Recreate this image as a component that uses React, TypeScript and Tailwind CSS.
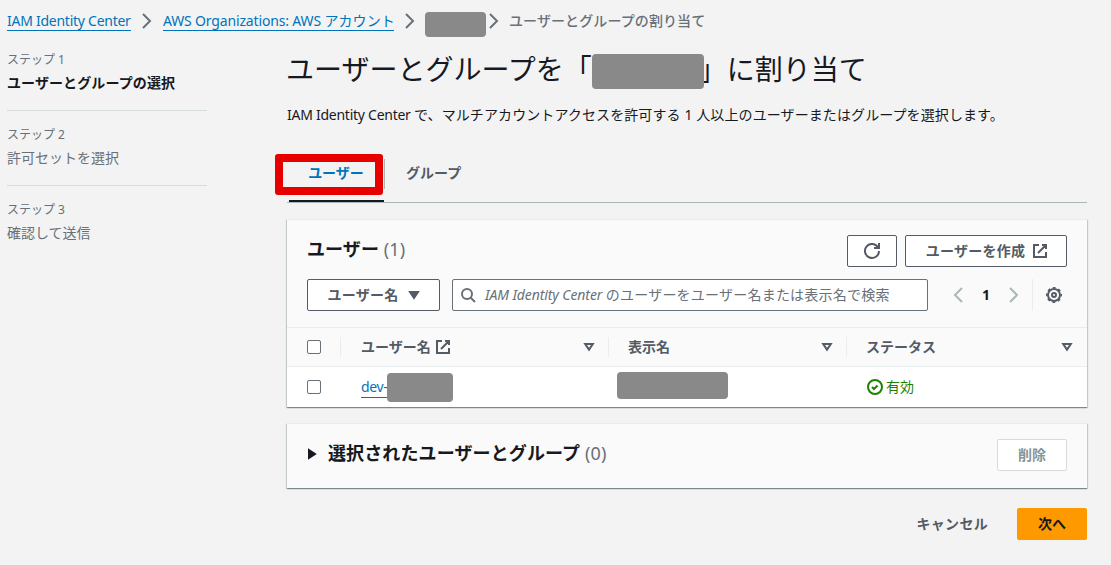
import type { ReactNode } from "react";

type IconProps = { children: ReactNode; className?: string };

function Icon({ children, className = "" }: IconProps) {
  return (
    <svg
      viewBox="0 0 16 16"
      className={`block size-4 shrink-0 fill-none stroke-current stroke-2 ${className}`}
    >
      {children}
    </svg>
  );
}

const External = ({ className = "" }: { className?: string }) => (
  <Icon className={className}>
    <path d="M10 2h4v4M6 10l8-8M14 9.05V14H2V2h5" />
  </Icon>
);

const ChevronRight = ({ className = "" }: { className?: string }) => (
  <Icon className={className}>
    <path d="m4 1 7 7-7 7" />
  </Icon>
);

const SortIcon = () => (
  <Icon className="text-[#545b64]">
    <path d="M4.2 5h7.6L8 10.6z" />
  </Icon>
);

const Checkbox = () => (
  <span className="block size-3.5 rounded-[2px] border border-[#687078] bg-white" />
);

const Mask = ({ className = "" }: { className?: string }) => (
  <span className={`relative z-10 block shrink-0 rounded-[4px] bg-[#898989] ${className}`} />
);

function Step({ label, title, active }: { label: string; title: string; active?: boolean }) {
  return (
    <li className="h-[75px] border-b border-[#d5dbdb] pt-3.5 last:border-0">
      <div className="text-xs leading-5 text-[#687078]">{label}</div>
      <div
        className={`mt-0.5 leading-[22px] ${active ? "font-bold tracking-[0.1px] text-[#16191f]" : "text-[#687078]"}`}
      >
        {title}
      </div>
    </li>
  );
}

const panel =
  "border-t border-[#eaeded] bg-[#fafafa] shadow-[0_1px_1px_0_rgba(0,28,36,0.3),1px_1px_1px_0_rgba(0,28,36,0.15),-1px_1px_1px_0_rgba(0,28,36,0.15)]";
const button =
  "flex h-8 items-center justify-center rounded-[2px] border border-[#545b64] bg-white font-bold text-[#545b64]";

export default function App() {
  return (
    <div className="h-[565px] w-[1111px] overflow-hidden bg-[#f3f3f3] pl-[7px] pr-6 text-sm leading-[22px] text-[#16191f] [font-family:'Noto_Sans','Noto_Sans_CJK_JP',sans-serif]">
      <nav className="flex h-[46px] items-start pt-2.5 text-[#687078]">
        <a className="h-[21px] w-[124px] whitespace-nowrap border-b border-[#0073bb] text-[#0073bb]">
          <span className="tracking-[-0.26px]">IAM Identity Center</span>
        </a>
        <ChevronRight className="mx-2 mt-[3px] text-[#687078]" />
        <a className="h-[21px] w-[231px] whitespace-nowrap border-b border-[#0073bb] text-[#0073bb]">
          <span className="tracking-[-0.16px]">AWS Organizations: AWS </span>
          <span className="tracking-[0.1px]">アカウント</span>
        </a>
        <ChevronRight className="ml-2 mt-[3px] text-[#687078]" />
        <Mask className="ml-[7px] mt-0.5 h-[25px] w-[61px]" />
        <ChevronRight className="mr-[7px] mt-[3px] text-[#687078]" />
        <span className="whitespace-nowrap font-medium tracking-[0.1px]">ユーザーとグループの割り当て</span>
      </nav>

      <div className="flex gap-20">
        <ol className="-mt-[10px] w-[200px] shrink-0">
          <Step label="ステップ 1" title="ユーザーとグループの選択" active />
          <Step label="ステップ 2" title="許可セットを選択" />
          <Step label="ステップ 3" title="確認して送信" />
        </ol>

        <main className="w-[800px] shrink-0">
          <h1 className="-ml-px flex h-[46px] items-center whitespace-nowrap text-[28px] leading-[46px]">
            ユーザーとグループを「
            <Mask className="-mr-[5px] mt-[5px] h-[35px] w-[112px]" />
            」に割り当て
          </h1>
          <p className="mt-3 whitespace-nowrap">
            <span className="tracking-[-0.26px]">IAM Identity Center </span>
            <span className="tracking-[0.1px]">
              で、マルチアカウントアクセスを許可する 1 人以上のユーザーまたはグループを選択します。
            </span>
          </p>

          <div className="relative mt-7 flex h-[49px] items-start border-b border-[#aab7b8] font-bold">
            <div className="ml-0.5 flex h-12 w-[95px] justify-center border-b-2 border-[#16191f] pr-px pt-2 text-[#0073bb]">
              ユーザー
            </div>
            <div className="mt-[5px] h-[30px] w-px bg-[#aab7b8]" />
            <div className="pl-[21px] pt-2 text-[#545b64]">グループ</div>
            <div className="absolute -left-3 top-0 h-[41px] w-[108px] rounded-[3px] border-8 border-[#e60000]" />
          </div>

          <section className={`mt-4 h-[188px] ${panel}`}>
            <div className="flex h-[47px] items-end justify-between px-5">
              <h2 className="mb-1 text-lg font-bold tracking-[0.1px]">
                ユーザー <span className="font-normal text-[#687078]">(1)</span>
              </h2>
              <div className="flex gap-2">
                <div className={`${button} w-[50px]`}>
                  <Icon>
                    <path d="M10 5h5V0M15 8a7 7 0 1 1-.9-3.5" />
                  </Icon>
                </div>
                <div className={`${button} w-[162px] gap-[7px] pl-0.5`}>
                  <span className="tracking-[0.25px]">ユーザーを作成</span>
                  <External />
                </div>
              </div>
            </div>

            <div className="mt-3 flex h-8 items-center pl-5">
              <div className={`${button} w-[133px] gap-2 pl-[3px]`}>
                <span className="tracking-[0.25px]">ユーザー名</span>
                <Icon>
                  <path d="M4 5h8l-4 6z" fill="currentColor" />
                </Icon>
              </div>
              <div className="ml-3 flex h-8 w-[476px] items-center rounded-[2px] border border-[#687078] bg-white pl-[7px] text-[#687078]">
                <Icon>
                  <circle cx="7" cy="7" r="5" />
                  <path d="m15 15-4.5-4.5" />
                </Icon>
                <span className="ml-[9px] whitespace-nowrap tracking-[0.22px]">
                  <i className="tracking-[-0.1px]">IAM Identity Center </i>
                  のユーザーをユーザー名または表示名で検索
                </span>
              </div>
              <ChevronRight className="ml-[22px] rotate-180 text-[#aab7b8]" />
              <span className="w-10 text-center font-bold">1</span>
              <ChevronRight className="text-[#aab7b8]" />
              <span className="ml-[10px] h-8 w-px bg-[#eaeded]" />
              <Icon className="ml-[13px] text-[#545b64]">
                <circle cx="8" cy="8" r="6" />
                <circle cx="8" cy="8" r="7.3" strokeWidth="1.4" strokeDasharray="2.87 2.87" strokeDashoffset="1.43" />
                <circle cx="8" cy="8" r="2" />
              </Icon>
            </div>

            <div className="mt-4 flex h-10 items-center border-y border-[#eaeded] px-5 font-bold text-[#545b64]">
              <Checkbox />
              <span className="ml-[19px] h-5 w-px bg-[#eaeded]" />
              <span className="ml-5 mr-1">ユーザー名</span>
              <External />
              <span className="ml-auto flex items-center">
                <SortIcon />
                <span className="ml-[11px] h-5 w-px bg-[#eaeded]" />
                <span className="ml-[19px] w-[191px]">表示名</span>
                <SortIcon />
                <span className="ml-[11px] h-5 w-px bg-[#eaeded]" />
                <span className="ml-[19px] w-[193px]">ステータス</span>
              </span>
              <span className="-mr-2">
                <SortIcon />
              </span>
            </div>

            <div className="flex h-10 items-center bg-white pl-5">
              <Checkbox />
              <a className="ml-10 h-[21px] w-[26px] whitespace-nowrap border-b border-[#0073bb] leading-5 tracking-[-0.4px] text-[#0073bb]">
                dev-
              </a>
              <Mask className="h-[29px] w-[66px]" />
              <Mask className="-mt-[3px] ml-[164px] h-[27px] w-[111px]" />
              <span className="ml-[139px] flex items-center gap-[3px] text-[#1d8102]">
                <Icon>
                  <circle cx="8" cy="8" r="7" />
                  <path d="m5 8 2 2 3.52-3.52" />
                </Icon>
                有効
              </span>
            </div>
          </section>

          <section className={`mt-4 flex h-[65px] items-center pl-[17px] pr-5 ${panel}`}>
            <Icon className="-mt-1">
              <path d="M5 4v8l6-4z" fill="currentColor" />
            </Icon>
            <h2 className="-mt-1.5 ml-2 text-lg font-bold tracking-[0.12px]">
              選択されたユーザーとグループ <span className="font-normal text-[#687078]">(0)</span>
            </h2>
            <div className="-mt-0.5 ml-auto flex h-8 w-[70px] items-center justify-center rounded-[2px] border border-[#d5dbdb] bg-white font-bold text-[#879596]">
              削除
            </div>
          </section>

          <div className="mt-5 flex items-center justify-end font-bold">
            <span className="mr-[29px] tracking-[0.3px] text-[#545b64]">キャンセル</span>
            <div className="flex h-8 w-[70px] items-center justify-center rounded-[2px] bg-[#ff9900]">
              次へ
            </div>
          </div>
        </main>
      </div>
    </div>
  );
}
